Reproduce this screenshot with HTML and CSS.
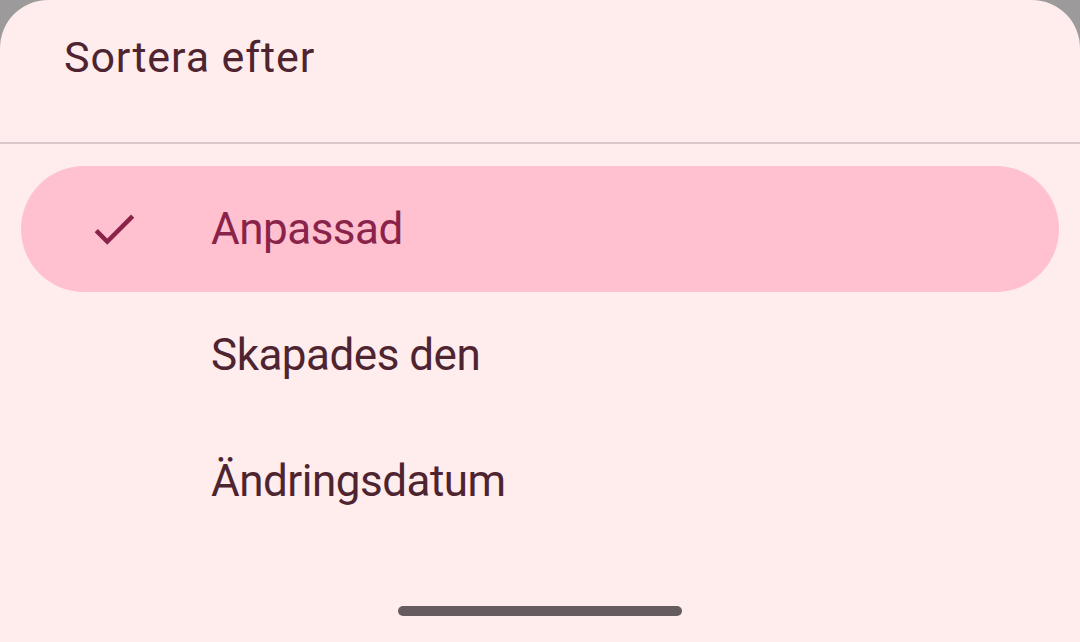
FILE: index.html
```html
<!DOCTYPE html>
<html lang="sv">
<head>
<meta charset="utf-8" />
<title>Sortera efter</title>
<link rel="stylesheet" href="styles.css">
</head>
<body>
<div class="sheet">
	<div class="sheet-title">Sortera efter</div>
	<div class="divider"></div>
	<ul class="options">
		<li class="option selected">
			<span class="check">
				<svg viewBox="0 0 24 24" width="54" height="54"><path d="M9 16.17L4.83 12l-1.42 1.41L9 19 21 7l-1.41-1.41z" fill="currentColor"/></svg>
			</span>
			<span class="label">Anpassad</span>
		</li>
		<li class="option">
			<span class="check"></span>
			<span class="label">Skapades den</span>
		</li>
		<li class="option">
			<span class="check"></span>
			<span class="label">Ändringsdatum</span>
		</li>
	</ul>
	<div class="handle"></div>
</div>
</body>
</html>
```

FILE: styles.css
```css
html, body {
	margin: 0;
	padding: 0;
	background-color: #9c9a9b;
}

.sheet {
	height: 642px;
	background-color: #ffeced;
	border-radius: 48px 48px 0px 0px;
	display: flex;
	flex-direction: column;
	font-family: Roboto, "Noto Sans", sans-serif;
	color: #4e2430;
	overflow: hidden;
}

.sheet-title {
	height: 142px;
	box-sizing: border-box;
	padding: 30px 64px 0px 64px;
	font-size: 43px;
	line-height: 54px;
	letter-spacing: 0.9px;
}

.divider {
	height: 2px;
	background-color: #dcc8cb;
}

.options {
	list-style: none;
	margin: 0;
	padding: 22px 21px 0px 21px;
}

.option {
	height: 126px;
	display: flex;
	align-items: center;
	border-radius: 63px;
	font-size: 44px;
	letter-spacing: -0.5px;
}

.option.selected {
	background-color: #ffc0d0;
	color: #892349;
}

.check {
	width: 54px;
	height: 54px;
	margin-left: 66px;
	margin-right: 70px;
	display: flex;
}

.label {
	line-height: 54px;
}

.handle {
	margin: auto auto 26px auto;
	width: 284px;
	height: 10px;
	border-radius: 5px;
	background-color: #645c5e;
}
```
